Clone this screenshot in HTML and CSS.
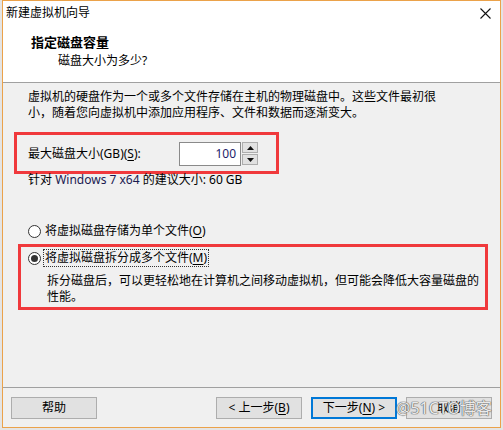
FILE: index.html
```html
<!DOCTYPE html>
<html lang="zh-CN">
<head>
<meta charset="utf-8">
<title>新建虚拟机向导</title>
<link rel="stylesheet" href="styles.css">
</head>
<body>
<div class="window">
  <div class="top">
    <div class="titlebar">
      <span class="title">新建虚拟机向导</span>
      <svg class="close" width="11" height="11" viewBox="0 0 11 11"><path d="M0.5 0.5 L10.5 10.5 M10.5 0.5 L0.5 10.5" stroke="#111" stroke-width="1.1" fill="none"/></svg>
    </div>
    <div class="header">
      <div class="h-title">指定磁盘容量</div>
      <div class="h-sub">磁盘大小为多少?</div>
    </div>
  </div>
  <div class="content">
    <p class="intro">虚拟机的硬盘作为一个或多个文件存储在主机的物理磁盘中。这些文件最初很<br>小，随着您向虚拟机中添加应用程序、文件和数据而逐渐变大。</p>
    <div class="mark size-box">
      <span class="size-label">最大磁盘大小(GB)(<u>S</u>):</span>
      <div class="spin">
        <div class="spin-input">100</div>
        <div class="spin-btns">
          <div class="spin-btn"><svg width="7" height="4" viewBox="0 0 7 4"><path d="M3.5 0 L7 4 L0 4 Z" fill="#111"/></svg></div>
          <div class="spin-btn"><svg width="7" height="4" viewBox="0 0 7 4"><path d="M0 0 L7 0 L3.5 4 Z" fill="#111"/></svg></div>
        </div>
      </div>
    </div>
    <div class="hint">针对 <span class="os">Windows 7 x64</span> 的建议大小: 60 GB</div>
    <div class="radio-row single">
      <span class="radio"></span>
      <span class="radio-text">将虚拟磁盘存储为单个文件(<u>O</u>)</span>
    </div>
    <div class="mark split-box">
      <div class="radio-row">
        <span class="radio checked"></span>
        <span class="radio-text focus">将虚拟磁盘拆分成多个文件(<u>M</u>)</span>
      </div>
      <p class="desc">拆分磁盘后，可以更轻松地在计算机之间移动虚拟机，但可能会降低大容量磁盘的<br>性能。</p>
    </div>
  </div>
  <div class="footer">
    <div class="btn">帮助</div>
    <div class="spacer"></div>
    <div class="btn">&lt; 上一步(<u>B</u>)</div>
    <div class="btn default">下一步(<u>N</u>) &gt;</div>
    <div class="btn cancel">取消</div>
    <span class="watermark">@51CTO博客</span>
  </div>
</div>
</body>
</html>
```

FILE: styles.css
```css
* { box-sizing: border-box; }

html, body {
  margin: 0;
  padding: 0;
}

body {
  background: #e4e4e4;
  width: 503px;
  height: 430px;
  overflow: hidden;
  font-family: "Noto Sans", "Noto Sans CJK SC", sans-serif;
  font-size: 12px;
  line-height: 16px;
  color: #000;
}

u { text-decoration: underline; text-underline-offset: 2px; }

.window {
  margin-left: 2px;
  width: 499px;
  height: 428px;
  border: 1px solid #eba24a;
  display: flex;
  flex-direction: column;
  background: #f0f0f0;
}

.top {
  height: 82px;
  background: #fff;
  border-bottom: 1px solid #a0a0a0;
  flex: none;
}

.titlebar {
  height: 30px;
  display: flex;
  align-items: flex-start;
  padding: 4px 0 0 3px;
}

.title { flex: 1; }

.close {
  margin: 3px 9px 0 0;
}

.header {
  height: 51px;
  padding: 3px 0 0 28px;
}

.h-title {
  font-weight: bold;
  font-size: 13px;
  height: 16px;
}

.h-sub {
  margin-top: 3px;
  padding-left: 27px;
}

.content {
  height: 304px;
  flex: none;
  padding: 6px 0 0 0;
}

.intro {
  margin: 0;
  padding-left: 25px;
}

.mark {
  border: 3px solid #f0393c;
}

.size-box {
  margin: 11px 0 0 11px;
  width: 265px;
  height: 42px;
  display: flex;
  align-items: center;
  padding: 2px 18px 0 11px;
}

.size-label { flex: 1; }

.spin {
  display: flex;
  align-items: flex-start;
}

.spin-input {
  width: 62px;
  height: 24px;
  border: 1px solid #8a8a8a;
  background: #fff;
  text-align: right;
  padding: 3px 4px 0 0;
  color: #1c1c6a;
}

.spin-btns {
  display: flex;
  flex-direction: column;
  gap: 1px;
  margin-left: 1px;
}

.spin-btn {
  width: 16px;
  height: 11px;
  border: 1px solid #adadad;
  background: #e1e1e1;
  display: flex;
  align-items: center;
  justify-content: center;
}

.hint {
  margin-top: -2px;
  padding-left: 25px;
}

.os { color: #1a1a50; }

.radio-row {
  display: flex;
  align-items: center;
  height: 18px;
}

.single {
  margin-top: 34px;
  padding-left: 25px;
}

.radio {
  width: 13px;
  height: 13px;
  border: 1px solid #333;
  border-radius: 50%;
  background: #fff;
  display: flex;
  align-items: center;
  justify-content: center;
  flex: none;
}

.radio.checked::after {
  content: "";
  width: 7px;
  height: 7px;
  border-radius: 50%;
  background: #333;
}

.radio-text {
  margin-left: 2px;
  padding: 0 1px;
  border: 1px dotted transparent;
}

.radio-text.focus {
  border-color: #333;
}

.split-box {
  margin: 4px 12px 0 15px;
  height: 66px;
  padding: 2px 0 0 7px;
}

.desc {
  margin: 6px 0 0 0;
  padding-left: 19px;
}

.footer {
  height: 41px;
  flex: none;
  border-top: 1px solid #a0a0a0;
  display: flex;
  align-items: flex-start;
  padding: 9px 8px 0 8px;
  gap: 9px;
  position: relative;
}

.spacer { flex: 1; }

.btn {
  width: 86px;
  height: 22px;
  border: 1px solid #adadad;
  background: #e1e1e1;
  display: flex;
  align-items: center;
  justify-content: center;
  flex: none;
}

.btn.default {
  border: 2px solid #0078d7;
}

.btn.cancel {
  justify-content: flex-start;
  padding-left: 30px;
}

.watermark {
  position: absolute;
  left: 393px;
  top: 10px;
  font-size: 16px;
  line-height: 21px;
  color: rgba(255, 255, 255, 0.9);
  text-shadow: 0 0 1px #555, 0 0 1px #555, 0 0 1px #777;
}
```
